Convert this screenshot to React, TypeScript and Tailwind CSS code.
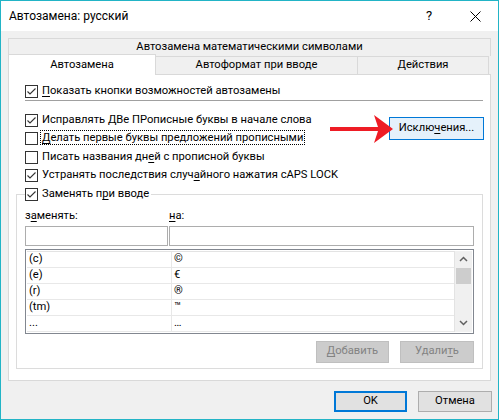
import React from 'react';

const font = "font-['Roboto','Noto_Sans',sans-serif]";

function Check({ checked }: { checked?: boolean }) {
  return (
    <span className="flex h-[13px] w-[13px] shrink-0 items-center justify-center border border-[#333333] bg-white">
      {checked && (
        <svg width="11" height="11" viewBox="0 0 11 11">
          <path d="M1.5 5.5 L4 8 L9.5 2.5" fill="none" stroke="#333333" strokeWidth="1.1" />
        </svg>
      )}
    </span>
  );
}

// text with one underlined access-key letter
function Key({ text, at }: { text: string; at?: number }) {
  if (at === undefined) return <>{text}</>;
  return (
    <>
      {text.slice(0, at)}
      <span className="underline underline-offset-2">{text[at]}</span>
      {text.slice(at + 1)}
    </>
  );
}

function Row({ checked, children }: { checked?: boolean; children: React.ReactNode }) {
  return (
    <div className="flex h-[18.5px] items-center gap-[4px] pl-[9px]">
      <Check checked={checked} />
      <span className="whitespace-nowrap">{children}</span>
    </div>
  );
}

const rows = [
  ['(c)', '©'],
  ['(e)', '€'],
  ['(r)', '®'],
  ['(tm)', '™'],
  ['...', '…'],
];

export default function App() {
  return (
    <div className={`${font} flex h-[420px] w-[499px] flex-col border border-[#22b4c6] text-[11.2px] text-black`}>
      {/* title bar */}
      <div className="flex h-[30px] shrink-0 items-center bg-white">
        <span className="pl-[8px] text-[12px]">Автозамена: русский</span>
        <span className="ml-auto flex w-[46px] justify-center text-[13px]">?</span>
        <span className="flex w-[46px] justify-center">
          <svg width="11" height="11" viewBox="0 0 11 11">
            <path d="M0.5 0.5 L10.5 10.5 M10.5 0.5 L0.5 10.5" stroke="#000" strokeWidth="1" />
          </svg>
        </span>
      </div>

      <div className="flex flex-1 flex-col bg-[#f0f0f0] pl-[7px] pt-[7px]">
        {/* tabs */}
        <div className="flex h-[18px] w-[483px] items-center justify-center border border-b-0 border-[#d9d9d9]">
          Автозамена математическими символами
        </div>
        <div className="flex h-[18px] w-[483px] items-end">
          <div className="relative z-10 -mb-px flex h-[21px] w-[148px] items-center justify-center border border-b-0 border-[#d9d9d9] bg-white">
            Автозамена
          </div>
          <div className="flex h-[18px] w-[202px] items-center justify-center border-r border-t border-[#d9d9d9]">
            Автоформат при вводе
          </div>
          <div className="flex h-[18px] w-[131px] items-center justify-center border-r border-t border-[#d9d9d9]">
            Действия
          </div>
        </div>

        {/* panel */}
        <div className="relative flex w-[483px] flex-col border border-[#d9d9d9] bg-white pb-[11px] pl-[7px] pt-[7px]">
          <div className="flex h-[18px] items-center gap-[4px] pl-[9px]">
            <Check checked />
            <span><Key text="Показать кнопки возможностей автозамены" at={0} /></span>
          </div>
          <div className="ml-[9px] h-px w-[458px] bg-[#a0a0a0]" />

          <div className="mt-[10px] flex w-[468px]">
            <div className="flex flex-col">
              <Row checked>Исправлять ДВе ПРописные буквы в начале слова</Row>
              <Row>
                <span className="-ml-px px-px outline outline-1 outline-dotted outline-black">
                  <Key text="Делать первые буквы предложений прописными" at={0} />
                </span>
              </Row>
            </div>
            <button className="ml-auto mt-[6px] flex h-[23px] w-[95px] items-center justify-center border border-[#0078d7] bg-[#e5f1fb]">
              <Key text="Исключения..." at={5} />
            </button>
          </div>
          <Row><Key text="Писать названия дней с прописной буквы" at={18} /></Row>
          <Row checked><Key text="Устранять последствия случайного нажатия cAPS LOCK" at={26} /></Row>

          <fieldset className="w-[467px] border border-[#dcdcdc] pb-[5px] pl-[8px] pr-[8px]">
            <legend className="pr-[2px]">
              <div className="flex h-[18.5px] items-center gap-[4px]">
                <Check checked />
                <span><Key text="Заменять при вводе" at={10} /></span>
              </div>
            </legend>
            <div className="mt-[5px] flex h-[16px] items-center">
              <span className="w-[144px]"><Key text="заменять:" at={1} /></span>
              <span><Key text="на:" at={0} /></span>
            </div>
            <div className="mt-px flex gap-[1px]">
              <div className="h-[20px] w-[143px] border border-[#adadad] bg-white" />
              <div className="h-[20px] w-[305px] border border-[#adadad] bg-white" />
            </div>
            <div className="mt-[3px] flex h-[85px] w-[449px] border border-[#828790] bg-white p-px">
              <div className="flex w-[428px] flex-col border-r border-t border-[#e3e3e3]">
                {rows.map(([a, b]) => (
                  <div key={a} className="flex h-[16px] border-b border-[#e8e8e8]">
                    <div className="flex w-[145px] items-center border-r border-[#e8e8e8] pl-[2px]">{a}</div>
                    <div className="flex items-center pl-[2px]">{b}</div>
                  </div>
                ))}
              </div>
              <div className="flex w-[17px] flex-col bg-[#f0f0f0]">
                <div className="flex h-[17px] items-center justify-center">
                  <svg width="9" height="6" viewBox="0 0 9 6">
                    <path d="M1 5 L4.5 1.5 L8 5" fill="none" stroke="#606060" strokeWidth="1.5" />
                  </svg>
                </div>
                <div className="mx-[1px] h-[16px] bg-[#cdcdcd]" />
                <div className="flex-1" />
                <div className="flex h-[17px] items-center justify-center">
                  <svg width="9" height="6" viewBox="0 0 9 6">
                    <path d="M1 1 L4.5 4.5 L8 1" fill="none" stroke="#606060" strokeWidth="1.5" />
                  </svg>
                </div>
              </div>
            </div>
            <div className="mt-[7px] flex justify-end gap-[11px]">
              <div className="flex h-[22px] w-[73px] items-center justify-center border border-[#bfbfbf] bg-[#cccccc] text-[#838383]">
                <Key text="Добавить" at={0} />
              </div>
              <div className="flex h-[22px] w-[74px] items-center justify-center border border-[#bfbfbf] bg-[#cccccc] text-[#838383]">
                <Key text="Удалить" at={5} />
              </div>
            </div>
          </fieldset>

          {/* red arrow */}
          <svg className="absolute left-[321px] top-[40px]" width="66" height="30" viewBox="0 0 66 30">
            <polygon points="0,12 48,12 44,0 63,14 44,28 48,16 0,16" fill="#ee1c25" />
          </svg>
        </div>

        {/* dialog buttons */}
        <div className="mr-[6px] mt-[10px] flex justify-end gap-[11px]">
          <button className="flex h-[21px] w-[73px] items-center justify-center border-2 border-[#0078d7] bg-[#e1e1e1]">OK</button>
          <button className="flex h-[21px] w-[74px] items-center justify-center border border-[#adadad] bg-[#e1e1e1]">Отмена</button>
        </div>
      </div>
    </div>
  );
}
